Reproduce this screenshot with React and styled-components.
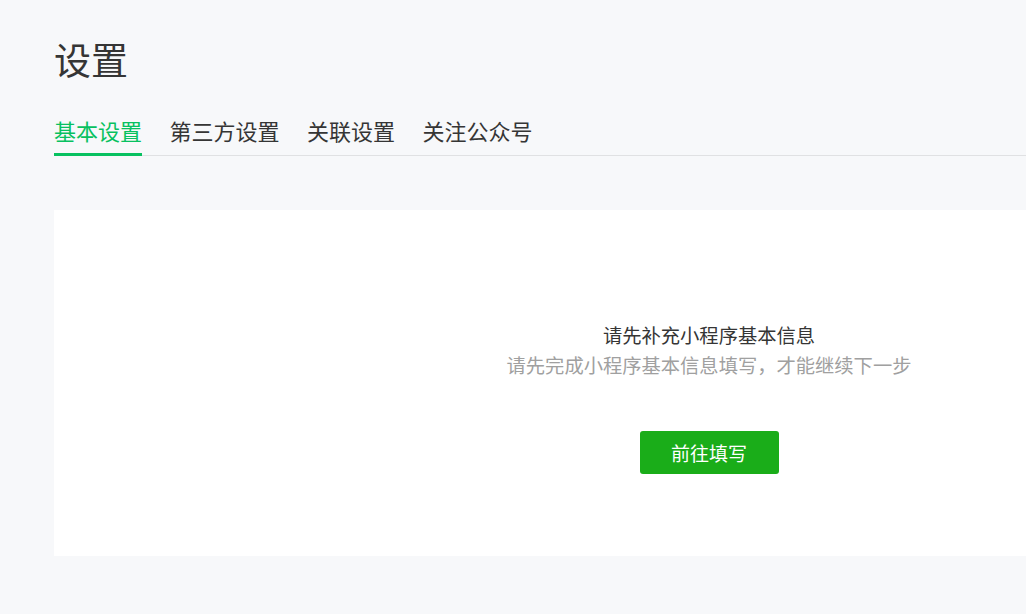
import styled, { createGlobalStyle } from "styled-components";

const GlobalStyle = createGlobalStyle`
  html, body {
    margin: 0;
    padding: 0;
    background: #f7f8fa;
    overflow: hidden;
  }
  body {
    font-family: "Noto Sans CJK SC", "Noto Sans", sans-serif;
  }
`;

const Page = styled.div`
  width: 1364px;
  padding: 30px 0 0 54px;
  box-sizing: border-box;
`;

const Title = styled.h1`
  margin: 0;
  font-size: 37px;
  font-weight: 400;
  line-height: 58px;
  color: #353535;
`;

const Tabs = styled.div`
  display: flex;
  gap: 27.5px;
  margin-top: 26px;
  border-bottom: 1px solid #e0e1e3;
`;

const Tab = styled.div`
  font-size: 22px;
  line-height: 32px;
  padding-bottom: 7px;
  margin-bottom: -1px;
  color: ${(props) => (props.active ? "#07c160" : "#353535")};
  border-bottom: 3px solid ${(props) => (props.active ? "#07c160" : "transparent")};
  cursor: pointer;
`;

const Card = styled.div`
  margin-top: 54px;
  height: 346px;
  background: #fff;
  display: flex;
  flex-direction: column;
  align-items: center;
  padding-top: 110px;
  box-sizing: border-box;
`;

const Heading = styled.div`
  font-size: 19.3px;
  line-height: 30px;
  color: #353535;
`;

const Desc = styled.div`
  font-size: 19.3px;
  line-height: 30px;
  color: #a0a0a0;
`;

const Button = styled.button`
  margin-top: 51px;
  width: 139px;
  height: 43px;
  border: none;
  border-radius: 3px;
  background: #1aad19;
  color: #fff;
  font-family: inherit;
  font-size: 19px;
  cursor: pointer;
`;

const tabs = ["基本设置", "第三方设置", "关联设置", "关注公众号"];

export default function App() {
  return (
    <>
      <GlobalStyle />
      <Page>
        <Title>设置</Title>
        <Tabs>
          {tabs.map((t, i) => (
            <Tab key={t} active={i === 0}>
              {t}
            </Tab>
          ))}
        </Tabs>
        <Card>
          <Heading>请先补充小程序基本信息</Heading>
          <Desc>请先完成小程序基本信息填写，才能继续下一步</Desc>
          <Button>前往填写</Button>
        </Card>
      </Page>
    </>
  );
}
